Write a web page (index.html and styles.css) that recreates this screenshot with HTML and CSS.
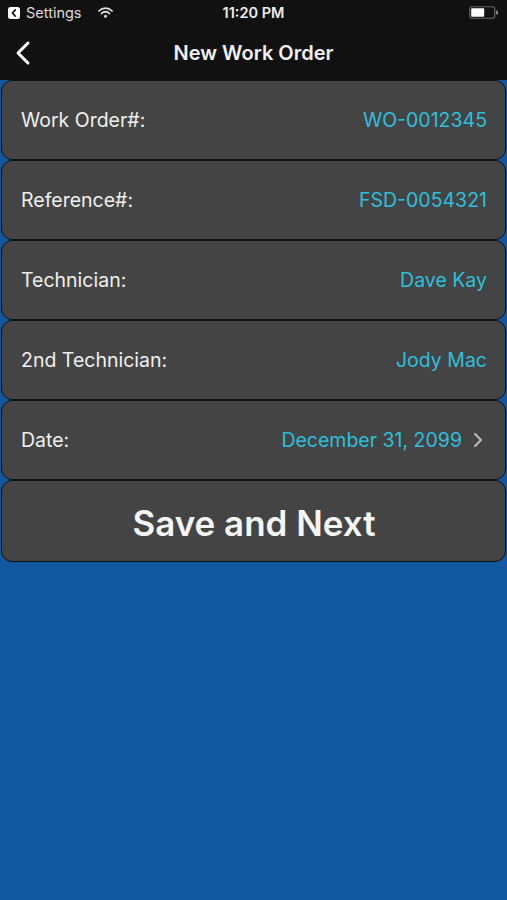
FILE: index.html
```html
<!DOCTYPE html>
<html lang="en">
<head>
  <meta charset="UTF-8" />
  <meta name="viewport" content="width=device-width, initial-scale=1.0"/>
  <title>New Work Order</title>
  <link rel="stylesheet" href="styles.css">
</head>
<body>
  <div class="status-bar">
    <div class="status-left">
      <span class="back-app">
        <svg width="12" height="12" viewBox="0 0 12 12"><rect width="12" height="12" rx="2.5" fill="#fff"/><path d="M7.2 3 L4.4 6 L7.2 9" stroke="#111" stroke-width="1.8" fill="none" stroke-linecap="round" stroke-linejoin="round"/></svg>
      </span>
      <span class="status-text">Settings</span>
      <svg class="wifi" width="15" height="11" viewBox="0 0 15 11">
        <path d="M1 4 A9 9 0 0 1 14 4" stroke="#ddd" stroke-width="1.8" fill="none" stroke-linecap="round"/>
        <path d="M3.5 6.5 A5.5 5.5 0 0 1 11.5 6.5" stroke="#ddd" stroke-width="1.8" fill="none" stroke-linecap="round"/>
        <circle cx="7.5" cy="9.3" r="1.5" fill="#ddd"/>
      </svg>
    </div>
    <div class="status-time">11:20 PM</div>
    <div class="status-right">
      <svg width="30" height="13" viewBox="0 0 30 13">
        <rect x="0.75" y="0.75" width="25" height="11.5" rx="2.5" stroke="#666" stroke-width="1.2" fill="none"/>
        <rect x="2.2" y="2.2" width="13" height="8.6" rx="1" fill="#fff"/>
        <rect x="27" y="4.5" width="2" height="4" rx="1" fill="#888"/>
      </svg>
    </div>
  </div>

  <header class="nav-bar">
    <svg class="nav-back" width="18" height="26" viewBox="0 0 18 26">
      <path d="M14 3 L4 13 L14 23" stroke="#fff" stroke-width="3" fill="none" stroke-linecap="round" stroke-linejoin="round"/>
    </svg>
    <h1 class="nav-title">New Work Order</h1>
  </header>

  <main class="form-list">
    <div class="row">
      <span class="row-label">Work Order#:</span>
      <span class="row-value">WO-0012345</span>
    </div>
    <div class="row">
      <span class="row-label">Reference#:</span>
      <span class="row-value">FSD-0054321</span>
    </div>
    <div class="row">
      <span class="row-label">Technician:</span>
      <span class="row-value">Dave Kay</span>
    </div>
    <div class="row">
      <span class="row-label">2nd Technician:</span>
      <span class="row-value">Jody Mac</span>
    </div>
    <div class="row row-date">
      <span class="row-label">Date:</span>
      <span class="row-value">December 31, 2099</span>
      <svg class="chevron" width="10" height="16" viewBox="0 0 10 16">
        <path d="M2 2 L8 8 L2 14" stroke="#bbb" stroke-width="2" fill="none" stroke-linecap="round" stroke-linejoin="round"/>
      </svg>
    </div>
    <button class="row save-btn" type="button">Save and Next</button>
  </main>
</body>
</html>
```

FILE: styles.css
```css
/* Page */
body {
  margin: 0;
  font-family: Inter, "Liberation Sans", Arial, sans-serif;
  background-color: #11599f;
  color: #fff;
  width: 507px;
  height: 900px;
  overflow: hidden;
}

/* Status bar */
.status-bar {
  height: 28px;
  box-sizing: border-box;
  background-color: #111;
  display: grid;
  grid-template-columns: 1fr auto 1fr;
  align-items: center;
  padding: 0 8px 3px;
  font-size: 14.5px;
}

.status-left {
  display: flex;
  align-items: center;
  gap: 6px;
}

.back-app svg {
  display: block;
}

.status-text {
  color: #ddd;
  margin-right: 10px;
}

.status-time {
  font-weight: 600;
  color: #eee;
}

.status-right {
  display: flex;
  justify-content: flex-end;
}

/* Navigation */
.nav-bar {
  height: 52px;
  background-color: #111;
  display: flex;
  align-items: center;
  justify-content: center;
  position: relative;
}

.nav-back {
  position: absolute;
  left: 14px;
  top: 12px;
}

.nav-title {
  margin: 0 0 2px;
  font-size: 20px;
  font-weight: 600;
  color: #f2f2f2;
}

/* Form rows */
.form-list {
  display: flex;
  flex-direction: column;
  padding: 0 1px;
}

.row {
  height: 80px;
  box-sizing: border-box;
  background-color: #444;
  border: 1.5px solid #111;
  border-radius: 11px;
  display: flex;
  align-items: center;
  padding: 0 18px 0 19px;
  font-size: 19.5px;
}

.row-label {
  flex: 1;
  color: #f0f0f0;
}

.row-value {
  color: #2cc0de;
}

.chevron {
  margin-left: 11px;
  margin-right: 2px;
}

.row-date {
  padding-right: 20px;
}

/* Save button */
.save-btn {
  height: 82px;
  justify-content: center;
  font-family: Inter, "Liberation Sans", Arial, sans-serif;
  font-size: 35px;
  font-weight: 600;
  color: #f5f5f5;
  cursor: pointer;
  padding-top: 3px;
}
```
